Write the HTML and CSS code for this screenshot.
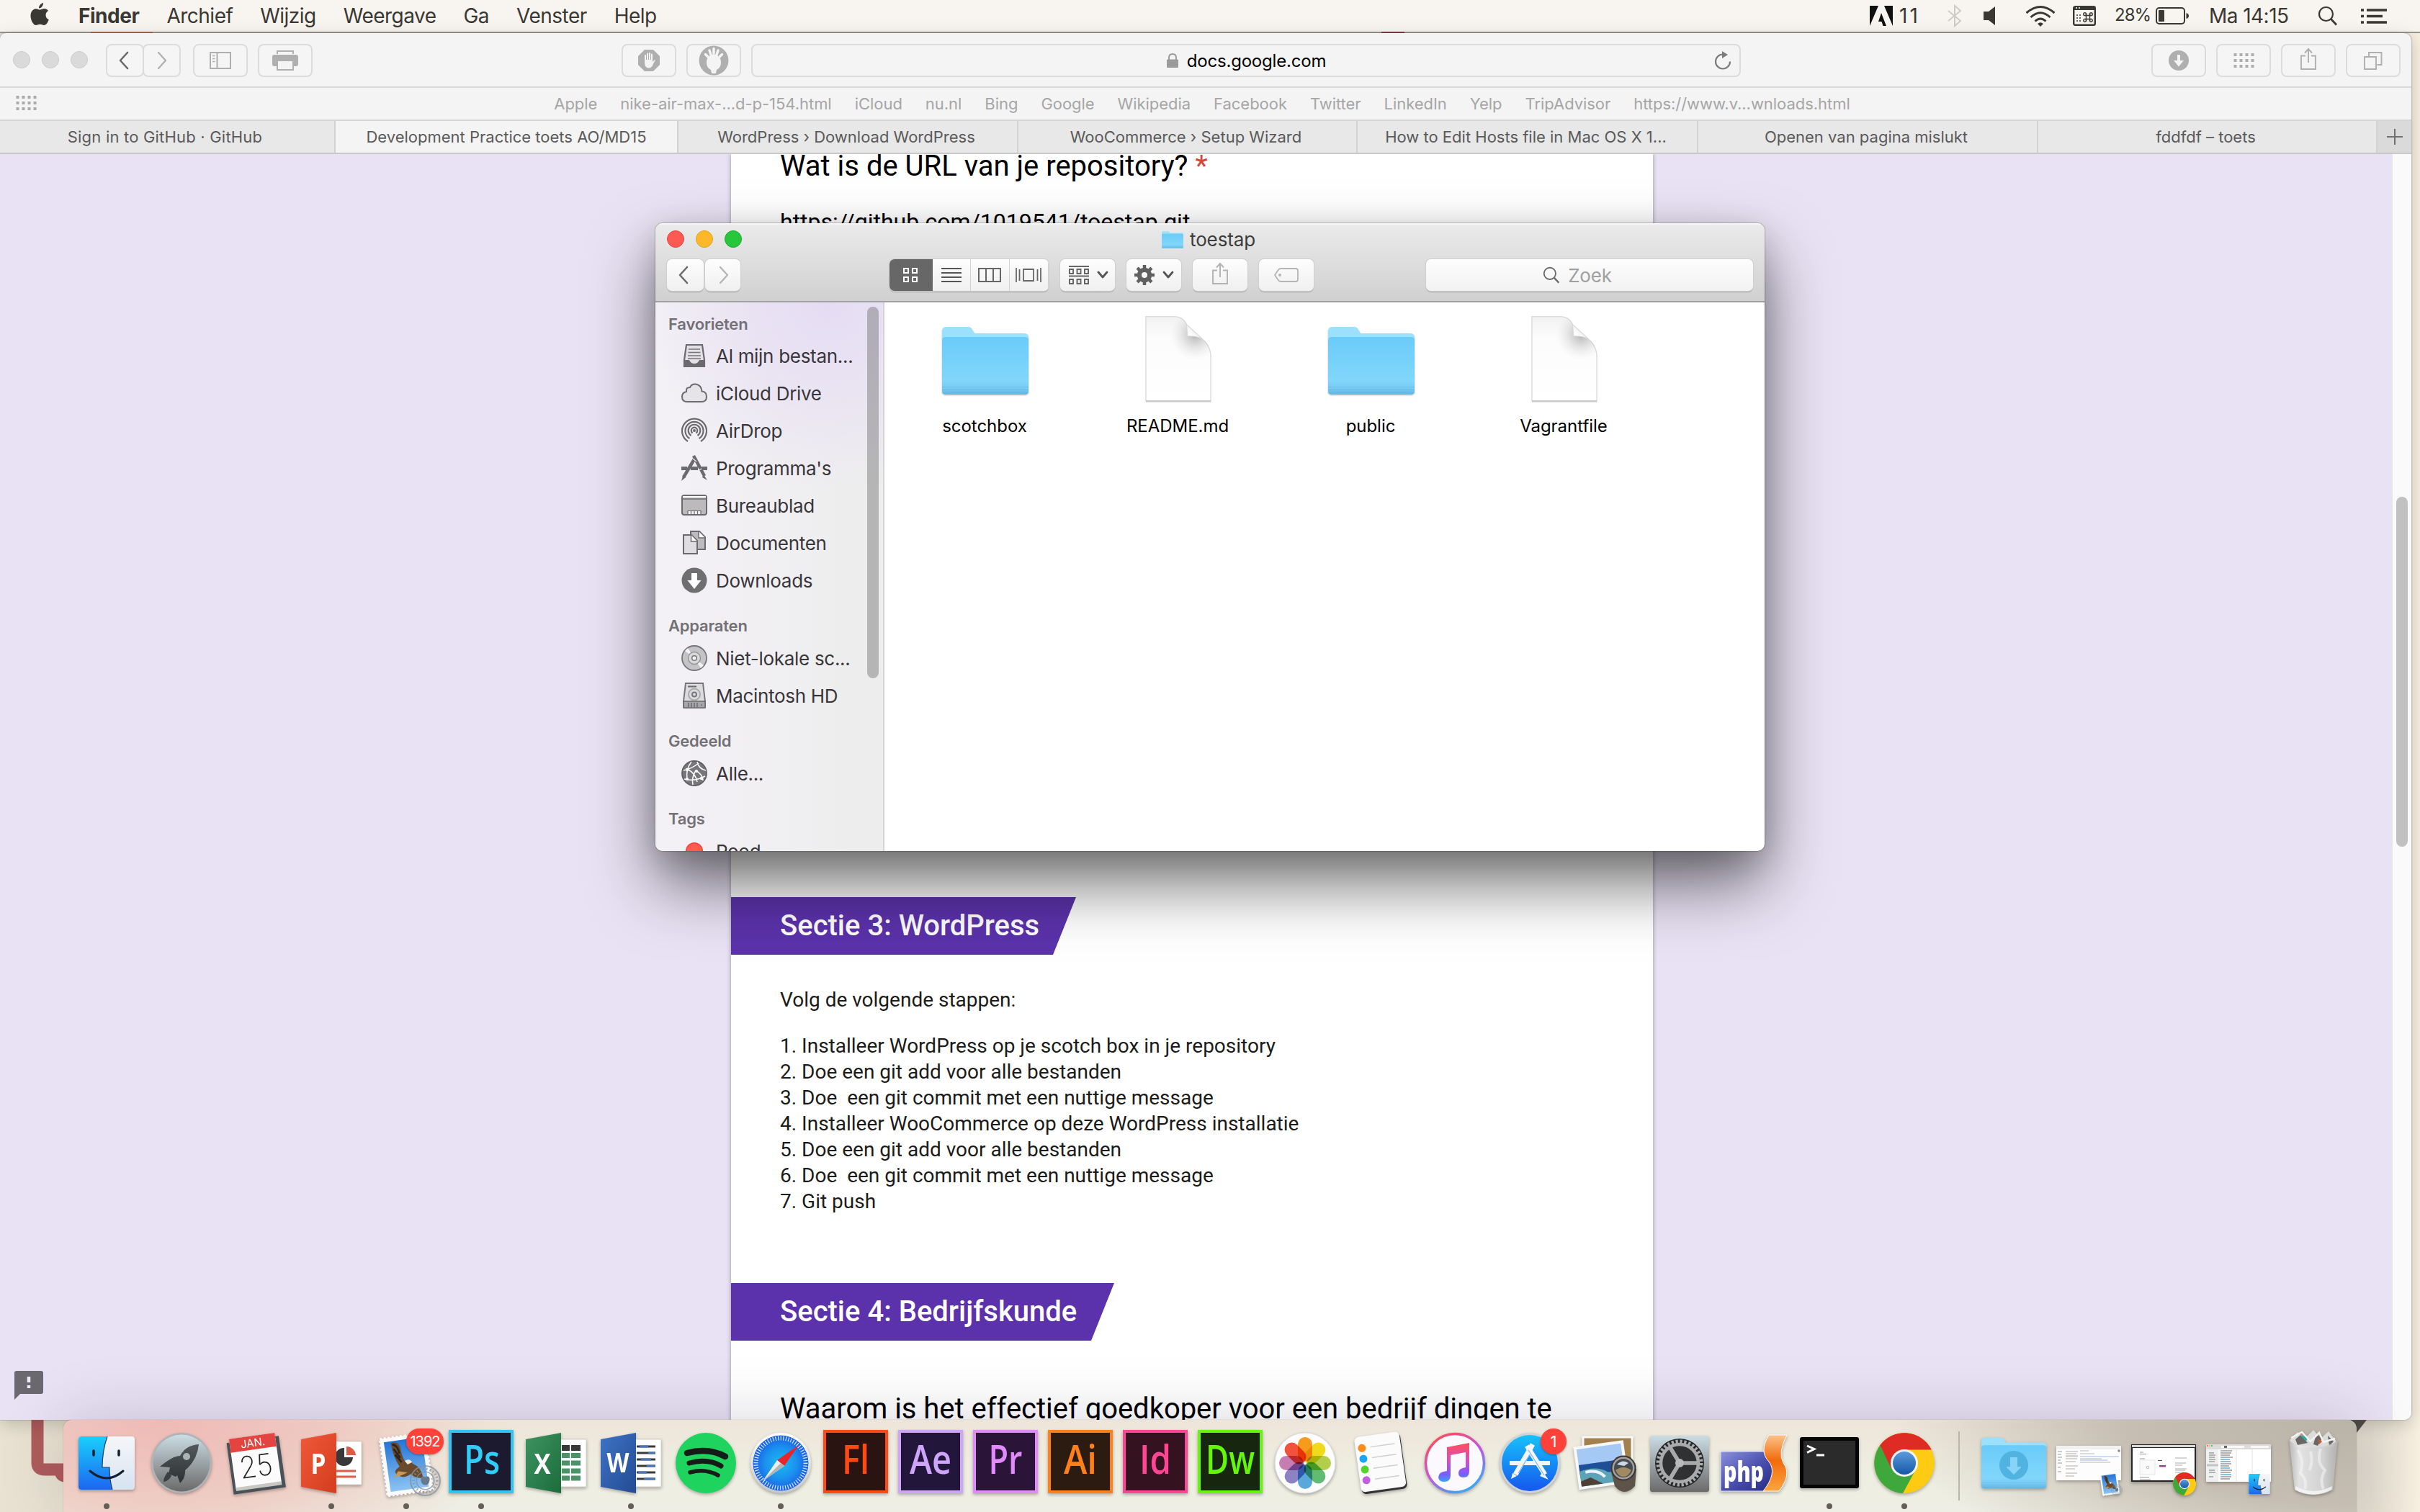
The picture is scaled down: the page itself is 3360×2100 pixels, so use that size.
FILE: index.html
```html
<!DOCTYPE html>
<html lang="nl">
<head>
<meta charset="utf-8">
<title>Bureaublad</title>
<link rel="stylesheet" href="styles.css">
</head>
<body>
<svg class="defs" aria-hidden="true">
  <defs>
    <linearGradient id="gFolder" x1="0" y1="0" x2="0" y2="1"><stop offset="0" stop-color="#6bcbf8"/><stop offset=".75" stop-color="#80d6fb"/><stop offset=".88" stop-color="#7accf4"/><stop offset="1" stop-color="#62b8e4"/></linearGradient>
    <linearGradient id="gFinder" x1="0" y1="0" x2="0" y2="1"><stop offset="0" stop-color="#19d0fc"/><stop offset="1" stop-color="#1d66f2"/></linearGradient>
    <linearGradient id="gFinderR" x1="0" y1="0" x2="0" y2="1"><stop offset="0" stop-color="#f6f6f8"/><stop offset="1" stop-color="#d6e3f1"/></linearGradient>
    <linearGradient id="gSteel" x1="0" y1="0" x2="0" y2="1"><stop offset="0" stop-color="#cbdde4"/><stop offset="1" stop-color="#6b6a6a"/></linearGradient>
    <linearGradient id="gRocket" x1="0" y1="0" x2="0" y2="1"><stop offset="0" stop-color="#53595b"/><stop offset="1" stop-color="#2d3335"/></linearGradient>
    <linearGradient id="gSilver" x1="0" y1="0" x2="0" y2="1"><stop offset="0" stop-color="#ffffff"/><stop offset="1" stop-color="#c3c6ca"/></linearGradient>
    <linearGradient id="gPpt" x1="0" y1="0" x2="1" y2="1"><stop offset="0" stop-color="#f0583a"/><stop offset="1" stop-color="#d33d1d"/></linearGradient>
    <linearGradient id="gXl" x1="0" y1="0" x2="1" y2="1"><stop offset="0" stop-color="#3d9560"/><stop offset="1" stop-color="#1c6b3c"/></linearGradient>
    <linearGradient id="gWd" x1="0" y1="0" x2="1" y2="1"><stop offset="0" stop-color="#3f73c6"/><stop offset="1" stop-color="#234b92"/></linearGradient>
    <linearGradient id="gSky" x1="0" y1="0" x2="0" y2="1"><stop offset="0" stop-color="#2474d6"/><stop offset="1" stop-color="#8cc4f4"/></linearGradient>
    <radialGradient id="gSafari"><stop offset="0" stop-color="#19bdf0"/><stop offset=".55" stop-color="#1a93ee"/><stop offset="1" stop-color="#1b5ce6"/></radialGradient>
    <linearGradient id="gNote" x1="0" y1="0" x2="0" y2="1"><stop offset="0" stop-color="#ff4f55"/><stop offset=".45" stop-color="#d64fc4"/><stop offset=".8" stop-color="#7a5cff"/><stop offset="1" stop-color="#3fa0f8"/></linearGradient>
    <linearGradient id="gRing" x1="0.2" y1="0" x2=".8" y2="1"><stop offset="0" stop-color="#ff4b52"/><stop offset=".5" stop-color="#c156de"/><stop offset="1" stop-color="#26b3f8"/></linearGradient>
    <linearGradient id="gStore" x1="0" y1="0" x2="0" y2="1"><stop offset="0" stop-color="#17c2fb"/><stop offset="1" stop-color="#1657ee"/></linearGradient>
    <linearGradient id="gPhp" x1="0" y1="0" x2="1" y2="1"><stop offset="0" stop-color="#8b92dd"/><stop offset=".5" stop-color="#4a4fae"/><stop offset="1" stop-color="#23277c"/></linearGradient>
    <linearGradient id="gOrange" x1="0" y1="0" x2="0" y2="1"><stop offset="0" stop-color="#fcc48a"/><stop offset=".45" stop-color="#f26a0c"/><stop offset="1" stop-color="#fba53f"/></linearGradient>
    <linearGradient id="gTrash" x1="0" y1="0" x2="1" y2="0"><stop offset="0" stop-color="#b9b8b8"/><stop offset=".2" stop-color="#e9e9ea"/><stop offset=".7" stop-color="#d6d6d7"/><stop offset="1" stop-color="#b4b2b0"/></linearGradient>
    <linearGradient id="gBlue" x1="0" y1="0" x2="0" y2="1"><stop offset="0" stop-color="#5b9bdc"/><stop offset="1" stop-color="#1558a8"/></linearGradient>
    <linearGradient id="gFile" x1="0" y1="0" x2="0" y2="1"><stop offset="0" stop-color="#f2f2f2"/><stop offset=".25" stop-color="#fcfcfc"/><stop offset="1" stop-color="#fff"/></linearGradient>
    <radialGradient id="gShade" gradientUnits="userSpaceOnUse" cx="72" cy="27" r="36"><stop offset="0" stop-color="#9a9a9a" stop-opacity=".75"/><stop offset=".45" stop-color="#b5b5b5" stop-opacity=".4"/><stop offset="1" stop-color="#ddd" stop-opacity="0"/></radialGradient>
    <linearGradient id="gCurl" x1="0" y1="1" x2=".8" y2=".2"><stop offset="0" stop-color="#fff"/><stop offset=".5" stop-color="#fafafa"/><stop offset="1" stop-color="#dcdcdc"/></linearGradient>
    <symbol id="folder" viewBox="0 0 120 96">
      <path d="M0 8Q0 1 6 1H36Q40 1 42 5L45 10H114Q120 10 120 16V30H0Z" fill="#9be1fe"/>
      <path d="M0 20Q0 15 5 15H115Q120 15 120 20V90Q120 95 115 95H5Q0 95 0 90Z" fill="url(#gFolder)"/>
      <path d="M0 84.500H120M0 88.500H120M0 92.500H120" stroke="#5fb5e0" stroke-width="1" opacity=".6"/>
    </symbol>
    <symbol id="file" viewBox="0 0 96 124">
      <path d="M2 1.500H44Q55 2 60 13L86 37Q94 46 94 58V121H2Z" fill="url(#gFile)" stroke="#dcdcdc" stroke-width="1.500"/>
      <path d="M2 1.500H44Q55 2 60 13L86 37Q94 46 94 58V121H2Z" fill="url(#gShade)"/>
      <path d="M60 13L88 39Q82 28.500 61 29Z" fill="url(#gCurl)" stroke="#d6d6d6" stroke-width=".8"/>
      <path d="M2 121.500H94" stroke="#c9c9c9" stroke-width="2.500"/>
    </symbol>
    <symbol id="finderFace" viewBox="0 0 78 74">
      <rect width="78" height="74" rx="4" fill="url(#gFinderR)"/>
      <path d="M4 0H40Q33 20 33 43H43Q43 60 47 74H4Q0 74 0 70V4Q0 0 4 0Z" fill="url(#gFinder)"/>
      <path d="M40 0Q33 20 33 43H43Q43 60 47 74" fill="none" stroke="#26405e" stroke-width="1.200"/>
      <path d="M21 20V26M56 20V26" stroke="#15202c" stroke-width="3.500" stroke-linecap="round"/>
      <path d="M16 48Q39 68 62 48" fill="none" stroke="#15202c" stroke-width="3" stroke-linecap="round"/>
    </symbol>
    <symbol id="chrome" viewBox="0 0 84 84">
      <circle cx="42" cy="42" r="42" fill="#fccb12"/>
      <path d="M42 42L8 18A42 42 0 0 1 79.500 23H42Z" fill="#dd2a22"/>
      <path d="M8.400 17.200A42 42 0 0 0 40 84L58 51L26 51Z" fill="#3fa83d"/>
      <path d="M8.400 17.200A42 42 0 0 1 79.500 23.500H42L24 50Z" fill="#de2b23"/>
      <circle cx="42" cy="42" r="19" fill="#f4f4f4"/><circle cx="42" cy="42" r="16" fill="url(#gBlue)"/>
    </symbol>
    <symbol id="stamp" viewBox="0 0 86 90">
      <g transform="rotate(-8 38 44)">
        <rect x="7" y="6" width="62" height="78" fill="#fafafa" stroke="#fafafa" stroke-width="3" stroke-dasharray="3 2.500"/>
        <rect x="12" y="11" width="52" height="68" fill="url(#gSky)"/>
      </g>
      <path d="M17 16Q27 12 30 22Q32 34 36 40Q44 38 47 44Q58 48 61 62Q54 66 44 58Q34 66 25 58Q20 54 29 48Q20 34 17 16Z" fill="#6a4a2c"/>
      <path d="M19 18Q26 18 29 30M21 24L30 36M23 32L32 42" stroke="#2a221c" stroke-width="2.500" fill="none"/>
      <path d="M36 40Q43 36 46 42L40 45Z" fill="#f1eadb"/><path d="M27 54L22 63L31 60L40 56Z" fill="#c99a56"/>
      <g fill="none" stroke="#84929f" opacity=".75"><circle cx="64" cy="67" r="20" stroke-width="2"/><circle cx="64" cy="67" r="12" stroke-width="1.500"/><circle cx="64" cy="67" r="16" stroke-width="3.500" stroke-dasharray="1.500 3"/></g>
      <path d="M64 62Q70 59 70 66Q69 73 64 73Q59 73 58 66Q58 59 64 62Z" fill="#68798c"/>
    </symbol>
    <symbol id="share" viewBox="0 0 24 32"><path d="M8 11.500H2V30H22V11.500H16M12 21V2M7 7.500L12 2L17 7.500" fill="none" stroke="currentColor" stroke-width="1.900"/></symbol>
    <symbol id="chevL" viewBox="0 0 16 26"><path d="M13 2L3 13L13 24" fill="none" stroke="currentColor" stroke-width="2.600" stroke-linecap="round" stroke-linejoin="round"/></symbol>
    <symbol id="chevR" viewBox="0 0 16 26"><path d="M3 2L13 13L3 24" fill="none" stroke="currentColor" stroke-width="2.200" stroke-linecap="round" stroke-linejoin="round"/></symbol>
    <symbol id="chevD" viewBox="0 0 16 12"><path d="M2 2L8 9L14 2" fill="none" stroke="currentColor" stroke-width="2.800" stroke-linecap="round" stroke-linejoin="round"/></symbol>
    <symbol id="dots" viewBox="0 0 28 21"><path d="M0 2H4M8 2H12M16 2H20M24 2H28M0 10H4M8 10H12M16 10H20M24 10H28M0 18H4M8 18H12M16 18H20M24 18H28" stroke="currentColor" stroke-width="4" fill="none"/></symbol>
    <symbol id="lens" viewBox="0 0 28 28"><circle cx="11.500" cy="11.500" r="9.500" fill="none" stroke="currentColor" stroke-width="2.200"/><path d="M18 18L26 26.500" stroke="currentColor" stroke-width="2.800"/></symbol>
  </defs>
</svg>

<main class="desktop">
  <svg class="wallpaper-art" viewBox="0 0 3360 2100" aria-hidden="true">
    <path d="M52 1960V2032Q52 2041 62 2041H110" fill="none" stroke="#b05c5c" stroke-width="17"/>
    <path d="M76 2048Q80 2059 92 2059V2046Z" fill="#b05c5c"/>
    <path d="M3264 1972H3286L3272 1990Z" fill="#55524e"/>
  </svg>

  <header class="menubar">
    <nav class="menus">
      <svg class="apple" viewBox="0 0 26 32"><path d="M18 0C18.300 4 15 7.600 12 7.500C11.700 4 15 .5 18 0ZM25 11C22.500 12.500 21.500 14.500 21.500 17C21.500 20 23.300 22.300 25.700 23.200C24.700 26.500 22.200 31 19 31C17 31 16 29.800 13.500 29.800S10 31 8 31C4.500 31 .5 24.500 .5 18C.5 11.500 4.300 8.200 8 8.200C10.300 8.200 12 9.600 13.400 9.600C14.800 9.600 17 8 19.500 8C21.800 8 23.800 9.200 25 11Z" fill="currentColor"/></svg>
      <b>Finder</b><span>Archief</span><span>Wijzig</span><span>Weergave</span><span>Ga</span><span>Venster</span><span>Help</span>
    </nav>
    <div class="status">
      <svg class="s-adobe" viewBox="0 0 32 28"><path d="M0 0H12L0 28ZM20 0H32V28ZM16 10L23 28H18.500L16.500 22H12Z" fill="#111"/></svg>
      <span class="s-count">11</span>
      <svg class="s-bt" viewBox="0 0 20 30"><path d="M1 8L18 22L10 29V1L18 8L1 22" fill="none" stroke="#cfccc6" stroke-width="2"/></svg>
      <svg class="s-vol" viewBox="0 0 17 26"><path d="M0 7H7L16 0V26L7 19H0Z" fill="currentColor"/></svg>
      <svg class="s-wifi" viewBox="0 0 42 29"><g fill="none" stroke="currentColor" stroke-width="3"><path d="M1.500 10Q21-7 40.500 10"/><path d="M7.500 16Q21 3.500 34.500 16"/><path d="M13.500 21.500Q21 14.500 28.500 21.500"/></g><path d="M17 25Q21 21.500 25 25L21 29Z" fill="currentColor"/></svg>
      <svg class="s-key" viewBox="0 0 32 28"><rect x="1.200" y="1.200" width="29.600" height="25.600" rx="2" fill="none" stroke="currentColor" stroke-width="2.400"/><path d="M1 1H31V6H1Z" fill="currentColor"/><path d="M4 3H6M8 3H10" stroke="#fff" stroke-width="1.500"/><path d="M5 13H7M9 13H11M5 17H7M9 17H11M5 21H7M9 21H11" stroke="currentColor" stroke-width="1.500"/><path d="M18.500 11V21M23.500 11V21M16.500 13.500H25.500M16.500 18.500H25.500" stroke="currentColor" stroke-width="1.400"/><g fill="none" stroke="currentColor" stroke-width="1.400"><circle cx="16.700" cy="11.700" r="1.900"/><circle cx="25.300" cy="11.700" r="1.900"/><circle cx="16.700" cy="20.300" r="1.900"/><circle cx="25.300" cy="20.300" r="1.900"/></g></svg>
      <span class="s-pct">28%</span>
      <svg class="s-batt" viewBox="0 0 46 24"><rect x="1" y="1" width="39" height="22" rx="4" fill="none" stroke="currentColor" stroke-width="2"/><rect x="4" y="4" width="8" height="16" rx="1" fill="currentColor"/><path d="M42.500 8Q46 9 46 12T42.500 16Z" fill="currentColor"/></svg>
      <span class="s-clock">Ma 14:15</span>
      <svg class="s-lens"><use href="#lens"/></svg>
      <svg class="s-list" viewBox="0 0 36 21"><path d="M0 2H4M8 2H36M0 10.500H4M8 10.500H30M0 19H4M8 19H36" stroke="currentColor" stroke-width="3.600"/></svg>
    </div>
  </header>

  <section class="safari">
    <div class="s-toolbar">
      <div class="lights"><i></i><i></i><i></i></div>
      <div class="nav"><button class="btn dark"><svg class="chev"><use href="#chevL"/></svg></button><button class="btn"><svg class="chev"><use href="#chevR"/></svg></button></div>
      <button class="btn b-side"><svg width="30" height="24" viewBox="0 0 30 24"><path d="M1 1H29V23H1ZM10.500 1V23" fill="none" stroke="currentColor" stroke-width="2"/><path d="M4 5.500H7.500M4 9.500H7.500M4 13.500H7.500" stroke="currentColor" stroke-width="1.700"/></svg></button>
      <button class="btn b-print"><svg width="36" height="28" viewBox="0 0 36 28"><path d="M7 5V1H29V5" fill="none" stroke="currentColor" stroke-width="2"/><path d="M3 6H33Q36 6 36 9V19Q36 22 33 22H30V13H6V22H3Q0 22 0 19V9Q0 6 3 6Z" fill="currentColor"/><path d="M7 14H29V27H7Z" fill="#f4f4f4" stroke="currentColor" stroke-width="2"/></svg></button>
      <button class="btn b-hand"><svg width="30" height="30" viewBox="0 0 30 30"><path d="M9 0H21L30 9V21L21 30H9L0 21V9Z" fill="currentColor"/><path d="M10 16V8M13 14V5.500M16 14V5M19 15V6.500" stroke="#f4f4f4" stroke-width="2" stroke-linecap="round"/><path d="M9 14H20V17L23.500 13.500Q24 15 21 19.500Q19.500 25 15 25.500Q9.500 25 9 19Z" fill="#f4f4f4"/></svg></button>
      <button class="btn b-ghost"><svg width="42" height="42" viewBox="0 0 42 42"><circle cx="21" cy="21" r="20.500" fill="currentColor"/><path d="M21 12Q31 14 31 24Q31 31 25 34L24 39H18L17 34Q11 31 11 24Q11 14 21 12Z" fill="#f4f4f4"/><path d="M9.500 12.500L13 16M15 7L17 13M21 4.500V11M27 7L25 13M32.500 12.500L29 16" stroke="#f4f4f4" stroke-width="3.500" stroke-linecap="round"/></svg></button>
      <div class="url"><span class="addr"><svg width="16" height="20" viewBox="0 0 16 20"><path d="M3 9V6Q3 1 8 1T13 6V9" fill="none" stroke="#9b9b9b" stroke-width="2"/><rect y="8.500" width="16" height="11.500" rx="1" fill="#9b9b9b"/></svg>docs.google.com</span>
        <svg class="reload" viewBox="0 0 24 26"><path d="M12 4.500A10 10 0 1 0 22 14.500" fill="none" stroke="#7b7b7b" stroke-width="2.200"/><path d="M11 0L19 5L11 10Z" fill="#7b7b7b"/></svg></div>
      <div class="right-tools">
        <button class="btn"><svg width="28" height="28" viewBox="0 0 28 28"><circle cx="14" cy="14" r="14" fill="currentColor"/><path d="M12 6H16V14H21L14 22.500L7 14H12Z" fill="#f4f4f4"/></svg></button>
        <button class="btn"><svg width="29" height="21"><use href="#dots"/></svg></button>
        <button class="btn"><svg class="share"><use href="#share"/></svg></button>
        <button class="btn"><svg width="26" height="25" viewBox="0 0 26 25"><path d="M1 7H17V24H1ZM7 6V1H24.500V18H18.500" fill="none" stroke="currentColor" stroke-width="1.900"/></svg></button>
      </div>
    </div>
    <div class="bookmarks">
      <svg class="grid-ico"><use href="#dots"/></svg>
      <span>Apple</span><span>nike-air-max-...d-p-154.html</span><span>iCloud</span><span>nu.nl</span><span>Bing</span><span>Google</span><span>Wikipedia</span><span>Facebook</span><span>Twitter</span><span>LinkedIn</span><span>Yelp</span><span>TripAdvisor</span><span>https://www.v...wnloads.html</span>
    </div>
    <div class="tabs">
      <span class="first">Sign in to GitHub · GitHub</span><span class="active">Development Practice toets AO/MD15</span><span>WordPress › Download WordPress</span><span>WooCommerce › Setup Wizard</span><span>How to Edit Hosts file in Mac OS X 1...</span><span>Openen van pagina mislukt</span><span>fddfdf – toets</span><span class="plus"><svg width="22" height="22" viewBox="0 0 22 22"><path d="M11 0V22M0 11H22" stroke="#6f6f6f" stroke-width="2"/></svg></span>
    </div>
    <div class="viewport">
      <article class="form">
        <h2 class="question">Wat is de URL van je repository? <em>*</em></h2>
        <p class="answer">https://github.com/1019541/toestap.git</p>
        <h3 class="section sec3"><span>Sectie 3: WordPress</span></h3>
        <p class="intro">Volg de volgende stappen:</p>
        <div class="steps">1. Installeer WordPress op je scotch box in je repository
2. Doe een git add voor alle bestanden
3. Doe  een git commit met een nuttige message
4. Installeer WooCommerce op deze WordPress installatie
5. Doe een git add voor alle bestanden
6. Doe  een git commit met een nuttige message
7. Git push</div>
        <h3 class="section sec4"><span>Sectie 4: Bedrijfskunde</span></h3>
        <h2 class="question last">Waarom is het effectief goedkoper voor een bedrijf dingen te</h2>
      </article>
      <div class="scroll-track"><i></i></div>
      <svg class="feedback" viewBox="0 0 40 40"><path d="M3 0H37Q40 0 40 3V29Q40 32 37 32H8L0 40V3Q0 0 3 0Z" fill="#6b6870"/><path d="M20 8V16M20 20V24" stroke="#eee9f6" stroke-width="4.500"/></svg>
    </div>
  </section>

  <section class="finder">
    <header class="f-head">
      <div class="f-title"><div class="f-lights"><i></i><i></i><i></i></div><svg class="mini-folder"><use href="#folder"/></svg><span>toestap</span></div>
      <div class="f-tools">
        <button class="fb back"><svg class="chev"><use href="#chevL"/></svg></button><button class="fb fwd"><svg class="chev"><use href="#chevR"/></svg></button>
        <div class="seg">
          <span class="on"><svg width="20" height="20" viewBox="0 0 20 20"><path d="M1 1H7V7H1ZM13 1H19V7H13ZM1 13H7V19H1ZM13 13H19V19H13Z" fill="none" stroke="#fff" stroke-width="2"/></svg></span>
          <span><svg width="28" height="20" viewBox="0 0 28 20"><path d="M0 1H28M0 7H28M0 13H28M0 19H28" stroke="#555" stroke-width="2"/></svg></span>
          <span><svg width="32" height="20" viewBox="0 0 32 20"><path d="M1 1H31V19H1ZM11 1V19M21 1V19" fill="none" stroke="#666" stroke-width="2"/></svg></span>
          <span><svg width="36" height="20" viewBox="0 0 36 20"><path d="M11 2H25V18H11ZM1 0V20M5.500 2V18M30.500 2V18M35 0V20" fill="none" stroke="#666" stroke-width="1.800"/></svg></span>
        </div>
        <button class="fb group"><svg width="28" height="27" viewBox="0 0 28 27"><path d="M0 1H28M0 14.500H28" stroke="#666" stroke-width="2"/><path d="M1 5H6V11H1ZM11.500 5H16.500V11H11.500ZM22 5H27V11H22ZM1 19H6V25H1ZM11.500 19H16.500V25H11.500ZM22 19H27V25H22Z" fill="none" stroke="#666" stroke-width="2"/></svg><svg class="chd"><use href="#chevD"/></svg></button>
        <button class="fb gear"><svg width="28" height="28" viewBox="-14 -14 28 28"><circle r="7" fill="none" stroke="#606060" stroke-width="6.500"/><path d="M0-14V14M-14 0H14M-9.900-9.900L9.900 9.900M9.900-9.900L-9.900 9.900" stroke="#606060" stroke-width="4.500"/><circle r="4" fill="#f6f6f6"/></svg><svg class="chd"><use href="#chevD"/></svg></button>
        <button class="fb f-share"><svg class="share"><use href="#share"/></svg></button>
        <button class="fb tag"><svg width="34" height="20" viewBox="0 0 34 20"><path d="M9 1H30Q33 1 33 4V16Q33 19 30 19H9Q7 19 5 16L1 10L5 4Q7 1 9 1Z" fill="none" stroke="#b5b5b5" stroke-width="1.800"/><circle cx="8" cy="10" r="2" fill="#b5b5b5"/></svg></button>
        <div class="search"><svg width="24" height="24" viewBox="0 0 28 28"><use href="#lens" width="28" height="28"/></svg>Zoek</div>
      </div>
    </header>
    <div class="f-body">
      <aside class="side">
        <h4 class="top">Favorieten</h4>
        <div class="row"><svg viewBox="0 0 36 36"><path d="M7 3H29L32 24V33H4V24Z" fill="#e3e1e6" stroke="#6b6a6e" stroke-width="2.200"/><path d="M4 24H11Q13 29 18 29T25 24H32V33H4Z" fill="#6b6a6e"/><path d="M10 9H26M9.500 13.500H26.500M9 18H27M9 22H27" stroke="#77767a" stroke-width="1.700"/></svg>Al mijn bestan...</div>
        <div class="row"><svg viewBox="0 0 36 36"><path d="M8 30Q1 30 1 23Q1 17 7 16Q6 10 12 10Q14 5 20 5.500Q28 7 28.500 15.500Q35 16 35 23Q35 30 28 30Z" fill="#e6e4e9" stroke="#6b6a6e" stroke-width="2"/></svg>iCloud Drive</div>
        <div class="row"><svg viewBox="0 0 36 36"><g fill="none" stroke="#6b6a6e" stroke-width="2.200"><path d="M9 33A17 17 0 1 1 27 33"/><path d="M11.500 29A12.500 12.500 0 1 1 24.500 29"/><path d="M13.500 25A8.300 8.300 0 1 1 22.500 25"/><path d="M15.500 21.500A4.300 4.300 0 1 1 20.500 21.500"/></g><circle cx="18" cy="18" r="2" fill="#6b6a6e"/></svg>AirDrop</div>
        <div class="row"><svg viewBox="0 0 36 36"><path d="M0 18.500H8M13 18.500H23M28 18.500H36" stroke="#6b6a6e" stroke-width="5"/><path d="M17 1L32 29" stroke="#6b6a6e" stroke-width="4.500"/><path d="M19 4L3 31" stroke="#6b6a6e" stroke-width="4.500"/><path d="M31 27L36 35L29 31Z" fill="#6b6a6e"/><path d="M2 29L0 36L6 31Z" fill="#6b6a6e"/><path d="M16 5L21 9M28 19L23 22" stroke="#efedf1" stroke-width="1.200"/></svg>Programma's</div>
        <div class="row"><svg viewBox="0 0 36 36"><rect x="1" y="4" width="34" height="27" rx="3" fill="#bcbabd" stroke="#6b6a6e" stroke-width="2"/><path d="M2 6H34" stroke="#fff" stroke-width="2"/><path d="M1 9H35" stroke="#6b6a6e" stroke-width="1.500"/><path d="M9 25.500H27V30H9Z" fill="#eee"/><path d="M9 30V25.500H27V30M13.500 25V30M18 25V30M22.500 25V30" fill="none" stroke="#6b6a6e" stroke-width="1.200"/></svg>Bureaublad</div>
        <div class="row"><svg viewBox="0 0 36 36"><path d="M13 2H25L33 10V27H13Z" fill="#bdbbbf" stroke="#6b6a6e" stroke-width="2"/><path d="M24 2V11H33" fill="#fff" stroke="#6b6a6e" stroke-width="1.500"/><path d="M3 7H14L22 15V33H3Z" fill="#dfdde1" stroke="#6b6a6e" stroke-width="2"/><path d="M13.500 7V16H22" fill="#fff" stroke="#6b6a6e" stroke-width="1.500"/></svg>Documenten</div>
        <div class="row"><svg viewBox="0 0 36 36"><circle cx="18" cy="18" r="17.500" fill="#6f6e70"/><path d="M14 8H22V18H27.500L18 30L8.500 18H14Z" fill="#fff"/></svg>Downloads</div>
        <h4>Apparaten</h4>
        <div class="row"><svg viewBox="0 0 36 36"><circle cx="18" cy="18" r="17" fill="#c4c3c6" stroke="#77767a" stroke-width="1.800"/><path d="M18 18L5 8L9 4ZM18 18L31 28L27 32Z" fill="#f3f2f4"/><circle cx="18" cy="18" r="8.500" fill="#d8d7da" stroke="#929195" stroke-width="1.300"/><circle cx="18" cy="18" r="3.300" fill="#f3f2f4" stroke="#77767a" stroke-width="1.500"/></svg>Niet-lokale sc...</div>
        <div class="row"><svg viewBox="0 0 36 36"><path d="M6 1H30L33 26V33Q33 35 31 35H5Q3 35 3 33V26Z" fill="#dcdbde" stroke="#77767a" stroke-width="2"/><path d="M3 26H33V35H3Z" fill="#a6a5a8" stroke="#6b6a6e" stroke-width="1.600"/><circle cx="18" cy="16.500" r="8" fill="none" stroke="#aaa9ac" stroke-width="2"/><circle cx="18" cy="16.500" r="3" fill="none" stroke="#77767a" stroke-width="2"/><path d="M9 5.500H21" stroke="#6b6a6e" stroke-width="2"/><path d="M10 28V34M14 28V34M18 28V34M22 28V34M28 30V32" stroke="#6b6a6e" stroke-width="1.500"/></svg>Macintosh HD</div>
        <h4>Gedeeld</h4>
        <div class="row"><svg viewBox="0 0 36 36"><circle cx="18" cy="18" r="17" fill="#77767a" stroke="#626165" stroke-width="1.800"/><path d="M14 2Q6 12 8 26M22 2Q24 12 34 14M3 14Q14 12 24 4M20 14Q14 24 16 34M20 14Q30 20 30 28M4 26Q18 30 33 22M8 12Q20 18 22 30" fill="none" stroke="#fff" stroke-width="1.500"/><circle cx="8" cy="13" r="2.200" fill="#fff"/><circle cx="21" cy="15" r="2" fill="#fff"/><circle cx="8" cy="26" r="2" fill="#fff"/><circle cx="28" cy="25" r="2.200" fill="#fff"/></svg>Alle...</div>
        <h4>Tags</h4>
        <div class="row"><svg viewBox="0 0 36 36"><circle cx="18" cy="18" r="11.300" fill="#ff5b52" stroke="#f0453c" stroke-width="1.500"/></svg>Rood</div>
        <i class="side-thumb"></i>
      </aside>
      <div class="files">
        <figure><svg class="i-folder"><use href="#folder"/></svg><figcaption>scotchbox</figcaption></figure>
        <figure><svg class="i-file"><use href="#file"/></svg><figcaption>README.md</figcaption></figure>
        <figure><svg class="i-folder"><use href="#folder"/></svg><figcaption>public</figcaption></figure>
        <figure><svg class="i-file"><use href="#file"/></svg><figcaption>Vagrantfile</figcaption></figure>
      </div>
    </div>
  </section>

  <footer class="dock">
    <div class="app run"><svg viewBox="0 0 104 128"><use href="#finderFace" x="13" y="23" width="78" height="74"/></svg></div>
    <div class="app"><svg viewBox="0 0 104 128"><circle cx="52" cy="60" r="42" fill="#aeb4b8"/><circle cx="52" cy="60" r="39.500" fill="url(#gSteel)"/><path d="M76 34Q58 35 50 50Q40 50 22 65L36 66L34 75L44 79L46 77L50 88Q58 80 57 70Q74 56 76 34Z" fill="url(#gRocket)"/><path d="M33 72Q27 80 27 86Q33 86 38 78Z" fill="#3b4143"/><circle cx="59" cy="51" r="5" fill="#aab4b8"/></svg></div>
    <div class="app"><svg viewBox="0 0 104 128"><g transform="rotate(-8 51 61)"><path d="M15 27H88V99H15Z" fill="#4a5257"/><rect x="19" y="22" width="64" height="70" fill="#fbfbfb"/><rect x="19" y="22" width="64" height="19" fill="#e4443f"/><path d="M19 90H83V95H19Z" fill="#c9c8c0"/><text x="51" y="37" class="t-inter" font-size="15" fill="#fff" text-anchor="middle">JAN.</text><text x="51" y="79" class="t-light" font-size="42" fill="#222" text-anchor="middle" textLength="46" lengthAdjust="spacingAndGlyphs">25</text></g></svg></div>
    <div class="app run"><svg viewBox="0 0 104 128"><rect x="56" y="30" width="38" height="60" fill="#fff" stroke="#d4d0cc"/><path d="M70 39V52H82A12.500 12.500 0 1 1 70 39Z" fill="#383838"/><path d="M73 37A13 13 0 0 1 86 49H73Z" fill="#dc5c47"/><path d="M58 71H86M58 79H86" stroke="#dc5c47" stroke-width="3"/><path d="M10 27L59 18V102L10 93Z" fill="url(#gPpt)"/><text x="34" y="75" class="t-bold" font-size="40" fill="#fff" text-anchor="middle" textLength="21" lengthAdjust="spacingAndGlyphs">P</text></svg></div>
    <div class="app run"><svg viewBox="0 0 104 128"><use href="#stamp" x="13" y="16" width="88" height="92"/></svg><span class="badge wide">1392</span></div>
    <div class="app run"><svg viewBox="0 0 104 128"><rect x="7" y="14" width="90" height="88" fill="#2fc6f5"/><rect x="11" y="18" width="82" height="80" fill="#1c1a2e"/><text x="53" y="75" class="t-adobe" font-size="56" fill="#2fcdf7" text-anchor="middle" textLength="50" lengthAdjust="spacingAndGlyphs">Ps</text></svg></div>
    <div class="app"><svg viewBox="0 0 104 128"><rect x="58" y="27" width="36" height="66" fill="#fff" stroke="#d4d0cc"/><path d="M60 39H86" stroke="#383838" stroke-width="8"/><path d="M60 49.500H86M60 60H86M60 71H86M60 81H86" stroke="#4a9468" stroke-width="7"/><path d="M72 34V86" stroke="#fff" stroke-width="2"/><path d="M10 27L59 18V102L10 93Z" fill="url(#gXl)"/><text x="33" y="75" class="t-bold" font-size="40" fill="#fff" text-anchor="middle" textLength="23" lengthAdjust="spacingAndGlyphs">X</text></svg></div>
    <div class="app run"><svg viewBox="0 0 104 128"><rect x="58" y="27" width="36" height="66" fill="#fff" stroke="#d4d0cc"/><path d="M60 37H86M60 46H86M60 55H86M60 64H86M60 73H86M60 82H86" stroke="#3a3a3a" stroke-width="3"/><path d="M64 37H76M76 46H86M66 55H80M74 64H86M62 73H74M70 82H86" stroke="#4a75b8" stroke-width="3"/><path d="M10 27L59 18V102L10 93Z" fill="url(#gWd)"/><text x="34" y="73" class="t-bold" font-size="38" fill="#fff" text-anchor="middle" textLength="31" lengthAdjust="spacingAndGlyphs">W</text></svg></div>
    <div class="app"><svg viewBox="0 0 104 128"><circle cx="52" cy="60" r="42" fill="#1ed45e"/><path d="M26 46Q56 38 79 51" fill="none" stroke="#151c17" stroke-width="8.500" stroke-linecap="round"/><path d="M29 60Q54 53 73 64" fill="none" stroke="#151c17" stroke-width="7" stroke-linecap="round"/><path d="M30 73Q51 67 69 77" fill="none" stroke="#151c17" stroke-width="5.500" stroke-linecap="round"/></svg></div>
    <div class="app run"><svg viewBox="0 0 104 128"><circle cx="52" cy="60" r="42" fill="url(#gSilver)"/><circle cx="52" cy="60" r="38.500" fill="url(#gSafari)"/><circle cx="52" cy="60" r="34.500" fill="none" stroke="#d5eaff" stroke-width="6" stroke-dasharray="1.200 2.400"/><path d="M77 35L57 64L47 56Z" fill="#e8252b"/><path d="M27 85L47 56L57 64Z" fill="#eceef0"/><path d="M27 85L52 60L57 64Z" fill="#b2b5b8"/></svg></div>
    <div class="app"><svg viewBox="0 0 104 128"><rect x="7" y="14" width="90" height="88" fill="#ff4a14"/><rect x="11" y="18" width="82" height="80" fill="#2a1411"/><text x="52" y="75" class="t-adobe" font-size="56" fill="#ff4a14" text-anchor="middle" textLength="38" lengthAdjust="spacingAndGlyphs">Fl</text></svg></div>
    <div class="app"><svg viewBox="0 0 104 128"><rect x="7" y="14" width="90" height="88" fill="#cfa5fb"/><rect x="11" y="18" width="82" height="80" fill="#22173a"/><text x="52" y="75" class="t-adobe" font-size="56" fill="#cfa5fb" text-anchor="middle" textLength="58" lengthAdjust="spacingAndGlyphs">Ae</text></svg></div>
    <div class="app"><svg viewBox="0 0 104 128"><rect x="7" y="14" width="90" height="88" fill="#e08afb"/><rect x="11" y="18" width="82" height="80" fill="#2a1538"/><text x="52" y="75" class="t-adobe" font-size="56" fill="#e08afb" text-anchor="middle" textLength="47" lengthAdjust="spacingAndGlyphs">Pr</text></svg></div>
    <div class="app"><svg viewBox="0 0 104 128"><rect x="7" y="14" width="90" height="88" fill="#ff8018"/><rect x="11" y="18" width="82" height="80" fill="#2b1b10"/><text x="52" y="75" class="t-adobe" font-size="56" fill="#ff8018" text-anchor="middle" textLength="46" lengthAdjust="spacingAndGlyphs">Ai</text></svg></div>
    <div class="app"><svg viewBox="0 0 104 128"><rect x="7" y="14" width="90" height="88" fill="#ff4594"/><rect x="11" y="18" width="82" height="80" fill="#34121f"/><text x="52" y="75" class="t-adobe" font-size="56" fill="#ff4594" text-anchor="middle" textLength="44" lengthAdjust="spacingAndGlyphs">Id</text></svg></div>
    <div class="app"><svg viewBox="0 0 104 128"><rect x="7" y="14" width="90" height="88" fill="#66f60a"/><rect x="11" y="18" width="82" height="80" fill="#17260e"/><text x="52" y="75" class="t-adobe" font-size="56" fill="#66f60a" text-anchor="middle" textLength="68" lengthAdjust="spacingAndGlyphs">Dw</text></svg></div>
    <div class="app"><svg viewBox="0 0 104 128"><circle cx="52" cy="60" r="42" fill="#fdfdfd" stroke="#d9dadc"/><g transform="translate(52 60)" class="petals"><rect x="-10" y="-36" width="20" height="34" rx="10" fill="#f89c1c"/><rect x="-10" y="-36" width="20" height="34" rx="10" fill="#f3dc1a" transform="rotate(45)"/><rect x="-10" y="-36" width="20" height="34" rx="10" fill="#b4d04a" transform="rotate(90)"/><rect x="-10" y="-36" width="20" height="34" rx="10" fill="#62bd74" transform="rotate(135)"/><rect x="-10" y="-36" width="20" height="34" rx="10" fill="#5aa9dc" transform="rotate(180)"/><rect x="-10" y="-36" width="20" height="34" rx="10" fill="#8d83c6" transform="rotate(225)"/><rect x="-10" y="-36" width="20" height="34" rx="10" fill="#c87fb4" transform="rotate(270)"/><rect x="-10" y="-36" width="20" height="34" rx="10" fill="#f2523c" transform="rotate(315)"/></g></svg></div>
    <div class="app"><svg viewBox="0 0 104 128"><g transform="rotate(-8 52 60)"><rect x="22" y="22" width="63" height="78" rx="6" fill="#333"/><rect x="21" y="20" width="63" height="77" rx="6" fill="#fbfbfb"/><path d="M42 36H76M42 51H76M42 66H76M42 81H76" stroke="#cfcfcf" stroke-width="1.500"/><circle cx="30" cy="36" r="5.500" fill="#ff8a14"/><circle cx="30" cy="51" r="5.500" fill="#1ba5f5"/><circle cx="30" cy="66" r="5.500" fill="#53d32e"/><circle cx="30" cy="81" r="5.500" fill="#c25fe0"/></g></svg></div>
    <div class="app"><svg viewBox="0 0 104 128"><circle cx="52" cy="60" r="40.500" fill="#fbf9fd" stroke="url(#gRing)" stroke-width="3.500"/><path d="M41 38L72 32V71Q72 80 64 80Q57 80 57 74Q57 67 67 66V45L46 49V77Q46 86 37 86Q30 86 29 80Q29 72 41 71Z" fill="url(#gNote)"/></svg></div>
    <div class="app"><svg viewBox="0 0 104 128"><circle cx="52" cy="60" r="42" fill="#cfd3d8"/><circle cx="52" cy="60" r="39" fill="url(#gStore)"/><path d="M24 60H80" stroke="#f2f6fa" stroke-width="6"/><path d="M48 36L73 76" stroke="#f2f6fa" stroke-width="7"/><path d="M56 34L32 76" stroke="#f2f6fa" stroke-width="7"/><path d="M70 72L78 83L66 78ZM28 74L26 82L34 78Z" fill="#f2f6fa"/><path d="M50 42L72 77M52 48L36 74" stroke="#7db8ef" stroke-width="1.200"/></svg><span class="badge">1</span></div>
    <div class="app"><svg viewBox="0 0 104 128"><rect x="22" y="24" width="68" height="58" fill="#a3804e" stroke="#f8f8f8" stroke-width="3"/><g transform="rotate(-8 45 62)"><rect x="12" y="33" width="70" height="60" fill="#f8f8f8"/><rect x="16" y="37" width="62" height="24" fill="#a5c8f4"/><rect x="16" y="59" width="62" height="18" fill="#1f4f96"/><path d="M16 68Q40 62 55 74L78 76V89H16Z" fill="#5ba3b8"/><path d="M16 82L30 78L46 89H16Z" fill="#4e4034"/><path d="M24 70Q42 68 50 80" stroke="#eef" stroke-width="4" fill="none"/></g><path d="M60 68L96 68L94 92Q79 108 66 92Z" fill="#5e5348"/><circle cx="78" cy="67" r="17.500" fill="#3a3532"/><circle cx="78" cy="67" r="15.500" fill="#a4a29e"/><circle cx="78" cy="67" r="13" fill="#464b52"/><path d="M67 70Q78 62 89 70Q85 79 78 79T67 70Z" fill="#a18a62"/><path d="M69 62Q77 54 85 60L79 64Z" fill="#cdd8e2"/></svg></div>
    <div class="app"><svg viewBox="0 0 104 128"><rect x="11" y="22" width="82" height="78" rx="3" fill="url(#gSteel)"/><circle cx="52" cy="60" r="34" fill="#262728"/><circle cx="52" cy="60" r="30" fill="none" stroke="#a9aaab" stroke-width="5" stroke-dasharray="3.200 2.700"/><circle cx="52" cy="60" r="26" fill="#303133" stroke="#a9aaab" stroke-width="4.500"/><path d="M52 60L38 37M52 60H78M52 60L38 83" stroke="#a9aaab" stroke-width="5.500"/><circle cx="52" cy="60" r="6" fill="#b9babb"/></svg></div>
    <div class="app"><svg viewBox="0 0 104 128"><path d="M5 44H66L84 72L66 99H5Z" fill="url(#gPhp)" stroke="#e8e8f4" stroke-width="1"/><path d="M72 21H97Q84 46 92 60Q104 76 86 99H64Q84 74 72 58Q58 44 72 21Z" fill="url(#gOrange)" stroke="#fff" stroke-width="1"/><text x="37" y="86" class="t-heavy" font-size="38" fill="#fff" text-anchor="middle" textLength="56" lengthAdjust="spacingAndGlyphs">php</text></svg></div>
    <div class="app run"><svg viewBox="0 0 104 128"><rect x="11" y="24" width="82" height="71" rx="3" fill="#050505"/><rect x="16" y="29" width="72" height="61" fill="#2b2b2c"/><path d="M21 36L31 40.500L21 45.500" fill="none" stroke="#fff" stroke-width="3"/><path d="M34 49H45" stroke="#fff" stroke-width="3"/></svg></div>
    <div class="app run"><svg viewBox="0 0 104 128"><use href="#chrome" x="10" y="18" width="84" height="84"/></svg></div>
    <i class="divider"></i>
    <div class="app"><svg viewBox="0 0 104 128"><use href="#folder" x="7" y="24" width="90" height="72" /><circle cx="52" cy="63" r="20" fill="#50b3e0"/><path d="M47 52H57V65H63L52 76L41 65H47Z" fill="#87d4f7"/></svg></div>
    <div class="app"><svg viewBox="0 0 104 128"><rect x="7" y="36" width="90" height="48" fill="#fdfdfd"/><rect x="7" y="36" width="90" height="5" fill="#f1f1f1"/><path d="M9 44H15M9 48H14M9 52H15M9 56H13M9 60H15M9 66H13M9 72H14" stroke="#9a9a9a" stroke-width="1"/><path d="M20 44H37M20 47H35M20 54H36M20 58H34M20 64H37M20 68H33M20 74H36M20 78H32" stroke="#b5aca4" stroke-width="1"/><path d="M20 50.500H37" stroke="#d5d5d5" stroke-width="3"/><path d="M40 43H52M40 47H60M40 54H70M40 59H82" stroke="#b8b8b8" stroke-width="1"/><path d="M40 51H94M40 56H78" stroke="#9bb8f0" stroke-width="1"/><circle cx="94" cy="43" r="1.800" fill="#888"/><use href="#stamp" x="66" y="72" width="34" height="34"/></svg></div>
    <div class="app"><svg viewBox="0 0 104 128"><rect x="7" y="34" width="90" height="52" fill="#26262a"/><rect x="8" y="35" width="88" height="3" fill="#d8d8d8"/><rect x="9" y="39" width="86" height="45" fill="#fff"/><path d="M19 45H24M19 47.500H28M19 54H26M19 80H32M19 83H34" stroke="#999" stroke-width="1"/><rect x="19" y="56" width="21" height="20" fill="#fafafa" stroke="#e6e6e6"/><circle cx="30" cy="66" r="1.800" fill="none" stroke="#bbb"/><path d="M44 56.500H50" stroke="#555"/><rect x="46" y="63" width="9" height="2.500" fill="#8e4a8c"/><path d="M68 53H84M68 60H83M68 63H78M68 68H84M68 70H82M68 73H80" stroke="#aaa" stroke-width="1"/><use href="#chrome" x="65" y="73" width="32" height="32"/></svg></div>
    <div class="app"><svg viewBox="0 0 104 128"><rect x="7" y="34" width="90" height="52" fill="#fff"/><rect x="7" y="34" width="90" height="7" fill="#dcdcdc"/><rect x="7" y="41" width="17" height="45" fill="#f0f0f2"/><circle cx="9" cy="36" r="1" fill="#f55"/><circle cx="12" cy="36" r="1" fill="#fb2"/><circle cx="15" cy="36" r="1" fill="#2c4"/><path d="M11 46H18M11 49H20M11 52H19M11 55H20M11 58H19M11 70H19M11 73H20M11 79H17" stroke="#777" stroke-width="1"/><path d="M8 63H24" stroke="#c5c5c5" stroke-width="3"/><path d="M27 43H43M27 46H42M27 49H40M27 52H44M27 58H41M27 61H42M27 64H39M27 70H43M27 73H41M27 79H42M27 82H40" stroke="#666" stroke-width="1.200"/><path d="M27 55H40M27 67H40M27 76H42" stroke="#4fb7ea" stroke-width="1.300"/><path d="M49 41V86M71 41V86" stroke="#e2e2e2"/><path d="M28 37.500H60M69 37.500H94" stroke="#f8f8f8" stroke-width="3"/><path d="M32 37.500H36" stroke="#666" stroke-width="3"/><use href="#finderFace" x="66" y="75" width="30" height="28"/></svg></div>
    <div class="app"><svg viewBox="0 0 104 128"><path d="M19 28L30 17L40 26L52 14L62 26L73 16L84 30L80 38H24Z" fill="#dcdcdb"/><path d="M27 27L34 21L44 32L30 35ZM56 20L64 26L58 36L52 34ZM72 22L80 30L74 36Z" fill="#6a6663"/><path d="M34 22L44 24L42 30Z" fill="#2ba8a0"/><path d="M58 26L64 30L60 34Z" fill="#c55a35"/><path d="M18 25Q20 37 52 37T86 25L79 97Q66 104 52 104T26 97Z" fill="url(#gTrash)" opacity=".93"/><path d="M30 42Q40 56 34 74Q44 84 40 96M62 40Q56 60 68 70Q60 84 66 96M48 44Q52 60 46 70" fill="none" stroke="#fafafa" stroke-width="4" opacity=".5"/><path d="M27 92Q52 106 78 92L77 97Q52 110 27 97Z" fill="#f8f8f8" opacity=".8"/><path d="M21 25L36 17L48 30L60 18L66 31L82 26" fill="none" stroke="#f4f4f4" stroke-width="2.500"/></svg></div>
  </footer>
</main>
</body>
</html>
```
FILE: styles.css
```css
* { box-sizing: border-box; }
body { margin: 0; font-family: Inter, "Liberation Sans", sans-serif; font-feature-settings: "calt" 0; }
svg { display: block; flex: none; overflow: visible; }
i { display: block; }
button { font: inherit; padding: 0; margin: 0; }
.defs { position: absolute; width: 0; height: 0; }

.desktop { position: relative; width: 3360px; height: 2100px; overflow: hidden; background: linear-gradient(90deg, #e9e2d2 0, #f5eddf 60%, #e3ddd0 98%, #f7efe0 100%); }
.wallpaper-art { position: absolute; inset: 0; width: 3360px; height: 2100px; }

/* menu bar */
.menubar { position: relative; height: 46px; padding: 0 46px 0 42px; display: flex; justify-content: space-between; background: linear-gradient(#f8f5f0, #f8f5f0) padding-box, linear-gradient(90deg, #9b978e 126px, #a8604a 126px 212px, #9b978e 212px 1918px, #7c2f38 1918px 1950px, #9b978e 1950px) border-box; border-bottom: 2px solid transparent; color: #3a3833; font-size: 28px; line-height: 44px; letter-spacing: -0.52px; }
.menus { display: flex; align-items: center; gap: 38px; white-space: nowrap; }
.menus b { font-weight: 700; letter-spacing: -.45px; margin-left: 3px; }
.apple { width: 26px; height: 32px; margin-top: -4px; }
.status { display: flex; align-items: center; white-space: nowrap; }
.s-adobe { width: 32px; height: 28px; }
.s-count { width: 33px; margin-left: 9px; letter-spacing: 3px; }
.s-bt { width: 20px; height: 30px; margin-left: 34px; }
.s-vol { width: 17px; height: 26px; margin-left: 30px; }
.s-wifi { width: 42px; height: 29px; margin-left: 41px; }
.s-key { width: 32px; height: 28px; margin-left: 24px; }
.s-pct { width: 48px; margin: -2px 0 0 26px; font-size: 24px; letter-spacing: -1px; }
.s-batt { width: 46px; height: 24px; margin-left: 9px; }
.s-clock { width: 116px; margin-left: 28px; letter-spacing: -.55px; }
.s-lens { width: 28px; height: 28px; margin-left: 35px; }
.s-list { width: 36px; height: 21px; margin-left: 32px; }

/* browser window */
.safari { position: absolute; left: 0; top: 46px; width: 3348px; height: 1926px; border-radius: 8px 10px 10px 0; overflow: hidden; background: #f4f4f4; box-shadow: 0 0 2px #777, 0 6px 24px rgba(0,0,0,.18); }
.s-toolbar { height: 76px; padding: 15px 15px 0 18px; display: flex; align-items: flex-start; border-bottom: 2px solid #d9d9d9; }
.lights { display: flex; gap: 16px; padding-top: 10px; }
.lights i { width: 24px; height: 24px; border-radius: 50%; background: #dadada; border: 1.500px solid #cbcbcb; }
.btn { width: 76px; height: 46px; display: flex; align-items: center; justify-content: center; background: #f5f5f5; border: 2px solid #dcdcdc; border-radius: 8px; color: #afafaf; }
.btn.dark { color: #6a6a6a; }
.chev { width: 16px; height: 26px; }
.nav { display: flex; margin-left: 25px; }
.nav .btn { width: 53px; }
.nav .btn.dark { padding-right: 4px; }
.nav .btn + .btn { margin-left: -2px; }
.b-side { margin-left: 17px; }
.b-print { margin-left: 14px; }
.b-hand { margin-left: 429px; }
.b-ghost { margin-left: 14px; }
.url { position: relative; width: 1374px; height: 46px; margin-left: 14px; border: 2px solid #dcdcdc; border-radius: 8px; display: flex; align-items: center; justify-content: center; font-size: 24px; letter-spacing: -.2px; color: #000; }
.addr { display: flex; align-items: center; gap: 12px; padding-left: 1px; }
.reload { position: absolute; right: 11px; top: 8px; width: 24px; height: 26px; }
.right-tools { display: flex; gap: 14px; margin-left: auto; }
.share { width: 24px; height: 32px; margin-top: -4px; }
.bookmarks { position: relative; height: 46px; display: flex; justify-content: center; gap: 32px; border-bottom: 2px solid #d5d5d5; color: #a6a6a6; font-size: 22px; line-height: 44px; letter-spacing: -.04px; white-space: nowrap; padding-right: 10px; }
.grid-ico { position: absolute; left: 22px; top: 11px; width: 29px; height: 21px; color: #ababab; }
.tabs { height: 46px; display: grid; grid-template-columns: 466px 476px 472px 471px 473px 472px 471px 47px; border-bottom: 2px solid #c9c9c9; background: #e8e8e8; color: #5a5a5a; font-size: 22px; line-height: 44px; letter-spacing: 0; text-align: center; white-space: nowrap; }
.tabs span { border-right: 2px solid #d2d2d2; padding-right: 4px; }
.tabs .first { padding-right: 6px; letter-spacing: .2px; }
.tabs .active { background: #f4f4f4; padding-right: 0; }
.tabs .plus { background: #dadada; border: 0; padding: 0; display: flex; align-items: center; justify-content: center; }

/* form page */
.viewport { position: relative; height: 1758px; background: #e9e2f4; overflow: hidden; font-family: Roboto, sans-serif; }
.form { width: 1280px; height: 1900px; margin-left: 1015px; background: #fff; box-shadow: 0 0 6px rgba(0,0,0,.35); padding-top: 1px; }
.question { margin: -8px 0 0 68px; font-size: 40px; line-height: 48px; font-weight: 400; color: #000; white-space: nowrap; }
.question em { font-style: normal; color: #db4437; }
.answer { margin: 35px 0 0 68px; font-size: 32px; line-height: 36px; color: #000; height: 36px; }
.section { width: 479px; height: 80px; margin: 920px 0 0; padding-left: 68px; background: #5b32ab; clip-path: polygon(0 0, 100% 0, calc(100% - 32px) 100%, 0 100%); color: #fff; font-size: 40px; line-height: 80px; font-weight: 500; white-space: nowrap; }
.intro { margin: 45px 0 0 68px; font-size: 28px; line-height: 36px; color: #1b1b1b; }
.steps { margin: 28px 0 0 68px; font-size: 28px; line-height: 36px; color: #1b1b1b; white-space: pre; }
.section.sec4 { width: 532px; margin-top: 95px; }
.question.last { margin: 71px 0 0 68px; letter-spacing: -.03px; }
.scroll-track { position: absolute; right: 0; top: 0; width: 28px; height: 100%; background: #fafafa; border-left: 2px solid #e6e6e6; }
.scroll-track i { width: 16px; height: 486px; margin: 476px 0 0 5px; border-radius: 8px; background: #c1c1c1; }
.feedback { position: absolute; left: 20px; top: 1690px; width: 40px; height: 40px; }

/* finder window */
.finder { position: absolute; left: 910px; top: 310px; width: 1540px; height: 872px; border-radius: 10px; box-shadow: 0 0 2px rgba(0,0,0,.6), 0 46px 90px rgba(0,0,0,.55), 0 10px 40px rgba(0,0,0,.14); overflow: hidden; background: #fff; }
.f-head { height: 110px; background: linear-gradient(#ebebeb, #d0d0d0); border-bottom: 2px solid #a2a2a2; box-shadow: inset 0 2px #f6f6f6; color: #3d3d3d; }
.f-title { position: relative; height: 50px; padding: 0 4px 4px 0; display: flex; align-items: center; justify-content: center; gap: 9px; font-size: 26px; line-height: 44px; letter-spacing: -.15px; }
.f-lights { position: absolute; left: 16px; top: 10px; display: flex; gap: 16px; }
.f-lights i { width: 24px; height: 24px; border-radius: 50%; background: #ff5a52; border: 1px solid #e2463f; }
.f-lights i:nth-child(2) { background: #fdb82a; border-color: #dfa023; }
.f-lights i:nth-child(3) { background: #28c63b; border-color: #1dab29; }
.mini-folder { width: 30px; height: 24px; }
.f-tools { display: flex; padding-left: 16px; height: 46px; }
.fb { height: 44px; width: 76px; border: 0; border-radius: 7px; background: linear-gradient(#fdfdfd, #f0f0f0); box-shadow: 0 0 0 1px #cfcfcf, 0 2px 1px #a4a4a4; display: flex; align-items: center; justify-content: center; color: #b3b3b3; }
.back { width: 51px; padding-right: 5px; color: #6b6b6b; }
.fwd { width: 49px; margin-left: 2px; padding-left: 2px; }
.seg { display: grid; grid-template-columns: 60px 53px 54px 54px; width: 221px; height: 44px; margin-left: 207px; border-radius: 7px; overflow: hidden; background: linear-gradient(#fdfdfd, #f0f0f0); box-shadow: 0 0 0 1px #cfcfcf, 0 2px 1px #a4a4a4; }
.seg span { display: flex; align-items: center; justify-content: center; border-right: 1.500px solid #d2d2d2; padding-right: 1px; }
.seg .on { background: #676767; border: 0; padding-right: 2px; }
.group { margin-left: 16px; gap: 11px; padding-left: 2px; }
.gear { margin-left: 16px; gap: 11px; }
.f-share, .tag { margin-left: 16px; }
.chd { width: 16px; height: 12px; color: #555; }
.search { width: 454px; height: 44px; margin-left: 156px; border-radius: 7px; background: linear-gradient(#fdfdfd, #f2f2f2); box-shadow: 0 0 0 1px #cfcfcf, 0 2px 1px #a4a4a4; display: flex; align-items: center; justify-content: center; gap: 11px; padding-right: 34px; font-size: 26px; letter-spacing: -.2px; color: #a0a0a0; }
.search svg { color: #6a6a6a; }
.f-body { display: flex; height: 762px; }
.side { position: relative; width: 318px; border-right: 2px solid #d6d3d8; background: radial-gradient(circle at 240px 0, #e5dcf3 0, #e9e2f3 100px, transparent 260px), linear-gradient(90deg, #f4f1f6, #ededed); overflow: hidden; }
.side h4 { margin: 0; height: 56px; padding: 19px 0 0 18px; font-size: 22px; line-height: 36px; font-weight: 600; letter-spacing: -.2px; color: #737176; }
.side h4.top { height: 48px; padding-top: 12px; }
.row { height: 52px; padding-left: 36px; display: flex; align-items: center; gap: 12px; font-size: 26px; letter-spacing: -.3px; color: #38363b; white-space: nowrap; }
.row svg { width: 36px; height: 36px; }
.side-thumb { position: absolute; left: 294px; top: 6px; width: 16px; height: 516px; border-radius: 8px; background: rgba(120,120,120,.48); }
.files { display: flex; padding: 17px 0 0 6px; }
.files figure { margin: 0; width: 268px; display: flex; flex-direction: column; align-items: center; }
.i-folder { width: 120px; height: 96px; margin: 16px 0 12px; filter: drop-shadow(0 1px 1px rgba(0,0,0,.25)); }
.i-file { width: 94px; height: 124px; }
.files figcaption { margin: 13px 2px 0 0; font-size: 24px; line-height: 36px; letter-spacing: -.03px; color: #000; }

/* dock */
.dock { position: absolute; left: 88px; top: 1972px; width: 3184px; height: 128px; padding-left: 8px; display: flex; border-radius: 12px 12px 0 0; background: radial-gradient(ellipse 480px 230px at 140px 0, #efbab6 0, rgba(238,196,188,.8) 50%, rgba(238,225,210,0) 100%), radial-gradient(ellipse 640px 240px at 3184px 0, #bab3a8 0, #c6beb2 50%, rgba(216,208,196,0) 100%), linear-gradient(#eee5d9, #eeede0 45%, #eeeee4); box-shadow: 0 0 1px rgba(0,0,0,.5), 0 0 90px rgba(20,0,40,.17); }
.app { position: relative; width: 104px; height: 128px; }
.app > svg { width: 104px; height: 128px; filter: drop-shadow(0 2px 2px rgba(0,0,0,.3)); }
.app.run::after { content: ""; position: absolute; left: 48px; top: 116px; width: 8px; height: 8px; border-radius: 50%; background: #625f57; }
.badge { position: absolute; right: 1px; top: 12px; width: 36px; height: 36px; border-radius: 18px; background: #ff4139; color: #fff; font-size: 22px; line-height: 36px; text-align: center; box-shadow: 0 1px 3px rgba(0,0,0,.3); }
.badge.wide { right: 0; width: 52px; font-size: 20px; letter-spacing: -1px; }
.divider { width: 2px; height: 96px; margin: 16px 23px 0 23px; background: #b9b6ac; }
.t-inter { font-family: Inter, sans-serif; }
.t-light { font-family: Inter, sans-serif; font-weight: 200; }
.t-bold { font-family: "Open Sans", sans-serif; font-weight: 700; }
.t-heavy { font-family: "Open Sans", sans-serif; font-weight: 800; }
.t-adobe { font-family: "Open Sans", sans-serif; font-weight: 600; }
.petals rect { mix-blend-mode: multiply; }
```
